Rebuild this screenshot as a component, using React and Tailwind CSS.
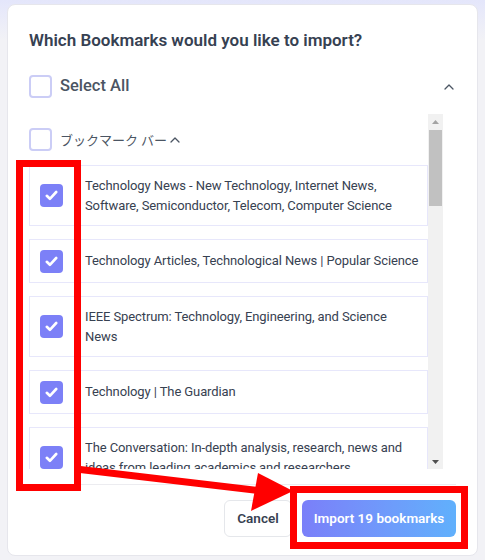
import React from "react";

const items = [
  ["Technology News - New Technology, Internet News,", "Software, Semiconductor, Telecom, Computer Science"],
  ["Technology Articles, Technological News | Popular Science"],
  ["IEEE Spectrum: Technology, Engineering, and Science", "News"],
  ["Technology | The Guardian"],
  ["The Conversation: In-depth analysis, research, news and", "ideas from leading academics and researchers"],
];

function Checked() {
  return (
    <div className="w-[23px] h-[23px] shrink-0 rounded-[4px] bg-[#7c80f7] flex items-center justify-center">
      <svg width="13" height="11" viewBox="0 0 13 11" fill="none">
        <path d="M1.8 5.8 L4.9 8.8 L11.2 2" stroke="white" strokeWidth="2.6" strokeLinecap="round" strokeLinejoin="round" />
      </svg>
    </div>
  );
}

function Unchecked() {
  return <div className="w-[23px] h-[23px] shrink-0 rounded-[4px] border-2 border-[#cbcdf6] bg-white" />;
}

function Chevron({ className }) {
  return (
    <svg className={className} width="10" height="6" viewBox="0 0 10 6" fill="none">
      <path d="M1 5 L5 1 L9 5" stroke="#4b5563" strokeWidth="1.3" strokeLinecap="round" strokeLinejoin="round" />
    </svg>
  );
}

export default function App() {
  return (
    <div
      className="relative w-[485px] h-[560px] overflow-hidden bg-[#f2f2f6]"
      style={{ fontFamily: 'Roboto, "Noto Sans CJK JP", sans-serif' }}
    >
      <div className="absolute inset-x-0 top-0 h-[40px] bg-gradient-to-b from-[#e4e6fb] to-transparent" />
      <div className="relative ml-[7px] mt-[4px] w-[471px] h-[552px] rounded-lg bg-white border border-[#e6e6ec] px-[21px] pt-[21px] flex flex-col">
        <h1 className="text-[17px] leading-7 font-semibold text-[#364152]">
          Which Bookmarks would you like to import?
        </h1>
        <div className="mt-[21px] flex items-center h-[23px]">
          <Unchecked />
          <span className="ml-[8px] text-[16.5px] font-medium text-[#4b5563]">Select All</span>
          <Chevron className="ml-auto mr-[2px]" />
        </div>
        <div className="mt-[16px] h-[355px] w-[414px] flex">
          <div className="flex-1 overflow-hidden pt-[14px]">
            <div className="flex items-center h-[23px]">
              <Unchecked />
              <span className="ml-[8px] text-[13px] text-[#4b5563]" style={{ fontFamily: '"Noto Sans CJK JP", sans-serif' }}>ブックマーク バー</span>
              <Chevron className="ml-[3px] mt-[1px]" />
            </div>
            <div className="mt-[14px] flex flex-col gap-[13px]">
              {items.map((lines, i) => (
                <div key={i} className="flex items-center border border-[#e7e7fb] pl-[10px] pr-[4px] py-[9.5px]">
                  <Checked />
                  <div className="ml-[22px] text-[13px] leading-[20px] tracking-[-0.1px] text-[#374151]">
                    {lines.map((l, j) => (
                      <span key={j} className="block whitespace-nowrap">{l}</span>
                    ))}
                  </div>
                </div>
              ))}
            </div>
          </div>
          <div className="w-[15px] bg-[#f1f1f1] flex flex-col items-center">
            <div className="h-[15px] flex items-center justify-center">
              <svg width="7" height="4" viewBox="0 0 7 4"><path d="M0 4 L3.5 0 L7 4 Z" fill="#a3a3a3" /></svg>
            </div>
            <div className="mt-[1px] w-[13px] h-[76px] bg-[#c1c1c1]" />
            <div className="mt-auto h-[15px] flex items-center justify-center">
              <svg width="7" height="4" viewBox="0 0 7 4"><path d="M0 0 L7 0 L3.5 4 Z" fill="#505050" /></svg>
            </div>
          </div>
        </div>
        <div className="mt-[15px] border-t border-[#ececf0] pt-[15px] flex justify-end gap-[10px]">
          <button className="h-[37px] w-[68px] rounded-md border border-[#e5e7eb] bg-white text-[13.5px] font-semibold text-[#374151]">
            Cancel
          </button>
          <button className="h-[37px] w-[154px] rounded-md bg-gradient-to-r from-[#7a7ff9] to-[#60b0fc] text-[13.5px] font-semibold text-white">
            Import 19 bookmarks
          </button>
        </div>
      </div>

      {/* annotations */}
      <div className="absolute left-[16px] top-[160px] w-[65px] h-[331px] border-[7px] border-[#ff0000]" />
      <div className="absolute left-[290px] top-[486px] w-[178px] h-[63px] border-[7px] border-[#ff0000]" />
      <svg className="absolute left-0 top-0" width="485" height="560" viewBox="0 0 485 560">
        <line x1="76" y1="469" x2="262" y2="491" stroke="#ff0000" strokeWidth="7" />
        <polygon points="258,473 293,491 251,511" fill="#ff0000" />
      </svg>
    </div>
  );
}
